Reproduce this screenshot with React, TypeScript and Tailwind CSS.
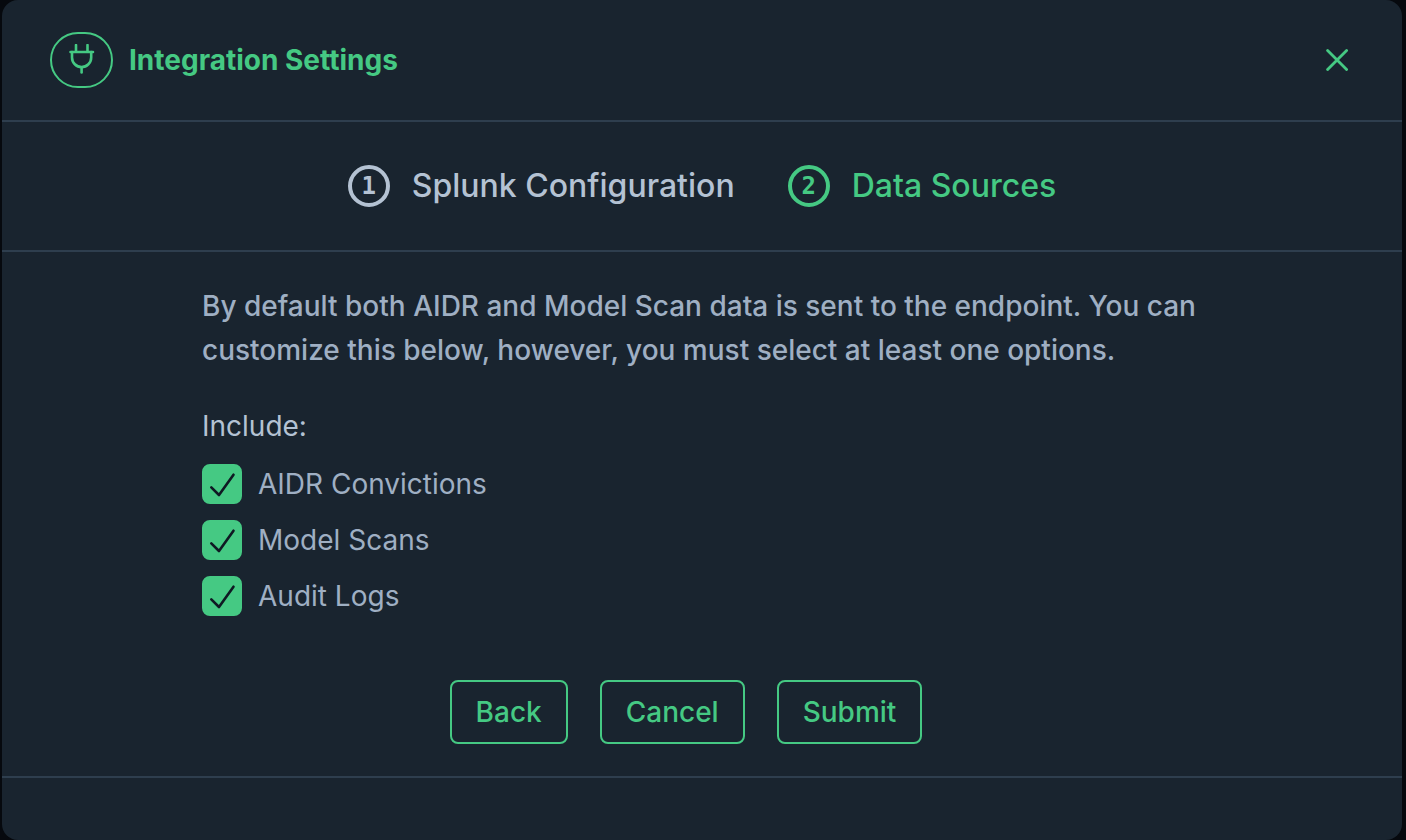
import React, { useState } from 'react';

const PlugIcon: React.FC = () => (
  <svg
    className="w-8 h-8"
    viewBox="0 0 32 32"
    fill="none"
    stroke="currentColor"
    strokeWidth="2.6"
    strokeLinecap="round"
    strokeLinejoin="round"
    aria-hidden="true"
  >
    <path d="M10 1v7M21.5 1v7M4.5 8h22.5" />
    <path d="M6 8v5.5a9.6 9.6 0 0 0 19.2 0V8" />
    <path d="M15.6 23.5v5" />
  </svg>
);

const CloseIcon: React.FC = () => (
  <svg
    className="w-6 h-6"
    viewBox="0 0 24 24"
    fill="none"
    stroke="currentColor"
    strokeWidth="2.8"
    strokeLinecap="round"
    aria-hidden="true"
  >
    <path d="M1.6 2.4l19 19.2M20.6 2.4L1.6 21.6" />
  </svg>
);

interface StepProps {
  number: number;
  label: string;
  active?: boolean;
}

const Step: React.FC<StepProps> = ({ number, label, active = false }) => (
  <li
    aria-current={active ? 'step' : undefined}
    className={`flex items-center gap-[22px] ${active ? 'text-[#45c983]' : 'text-[#b4c2d3]'}`}
  >
    <span className="flex h-[42px] w-[42px] shrink-0 items-center justify-center rounded-full border-4 border-current font-['DejaVu_Sans_Mono',monospace] text-2xl font-bold leading-none">
      {number}
    </span>
    <span className="text-[32px] leading-10 font-medium">{label}</span>
  </li>
);

interface CheckboxProps {
  label: string;
  checked: boolean;
  onChange: () => void;
}

const Checkbox: React.FC<CheckboxProps> = ({ label, checked, onChange }) => (
  <label className="flex w-fit cursor-pointer items-center gap-4">
    <span className="grid h-10 w-10 shrink-0">
      <input
        type="checkbox"
        checked={checked}
        onChange={onChange}
        className="peer col-start-1 row-start-1 h-10 w-10 appearance-none rounded-lg border-2 border-[#45c983] checked:bg-[#45c983]"
      />
      <svg
        className="pointer-events-none invisible col-start-1 row-start-1 h-10 w-10 text-[#0f1923] peer-checked:visible"
        viewBox="0 0 40 40"
        fill="none"
        stroke="currentColor"
        strokeWidth="2.6"
        strokeLinecap="round"
        strokeLinejoin="round"
        aria-hidden="true"
      >
        <path d="M9.3 23.3l7.7 7.7L31.5 10.7" />
      </svg>
    </span>
    <span className="text-[28px] leading-10 text-[#9fafc3]">{label}</span>
  </label>
);

const Button: React.FC<{ children: React.ReactNode }> = ({ children }) => (
  <button
    type="button"
    className="mr-8 h-16 rounded-lg border-2 border-[#45c983] px-6 text-[28px] leading-10 font-medium text-[#45c983]"
  >
    {children}
  </button>
);

const SOURCES = ['AIDR Convictions', 'Model Scans', 'Audit Logs'];

const App: React.FC = () => {
  const [selected, setSelected] = useState<string[]>(SOURCES);

  const toggle = (name: string) => {
    setSelected((prev) =>
      prev.includes(name) ? prev.filter((item) => item !== name) : [...prev, name]
    );
  };

  return (
    <div className="flex min-h-screen bg-[#06090e] pr-1 pl-0.5 font-['Inter',sans-serif]">
      <div
        role="dialog"
        aria-labelledby="dialog-title"
        className="flex flex-1 flex-col rounded-2xl bg-[#19242f]"
      >
        <header className="flex items-center justify-between border-b-2 border-[#2e3e4e] px-12 py-8">
          <div className="flex items-center gap-4 text-[#45c983]">
            <div className="flex h-14 w-[63px] items-center justify-center rounded-full border-2 border-current">
              <PlugIcon />
            </div>
            <h1 id="dialog-title" className="text-[28px] leading-10 font-bold">
              Integration Settings
            </h1>
          </div>
          <button type="button" aria-label="Close" className="p-1 text-[#45c983]">
            <CloseIcon />
          </button>
        </header>

        <ol className="flex items-center justify-center gap-[53px] border-b-2 border-[#2e3e4e] px-12 py-[43px]">
          <Step number={1} label="Splunk Configuration" />
          <Step number={2} label="Data Sources" active />
        </ol>

        <main className="border-b-2 border-[#2e3e4e] py-8">
          <div className="mx-auto max-w-[1000px]">
            <p className="text-[28px] leading-11 font-medium text-[#9fafc3]">
              By default both AIDR and Model Scan data is sent to the endpoint. You can
              customize this below, however, you must select at least one options.
            </p>
            <fieldset className="mt-8">
              <legend className="mb-4 text-[28px] leading-11 text-[#b4c2d3]">Include:</legend>
              <div className="flex flex-col gap-4">
                {SOURCES.map((name) => (
                  <Checkbox
                    key={name}
                    label={name}
                    checked={selected.includes(name)}
                    onChange={() => toggle(name)}
                  />
                ))}
              </div>
            </fieldset>
            <div className="mt-16 flex justify-center">
              <Button>Back</Button>
              <Button>Cancel</Button>
              <Button>Submit</Button>
            </div>
          </div>
        </main>
      </div>
    </div>
  );
};

export default App;
